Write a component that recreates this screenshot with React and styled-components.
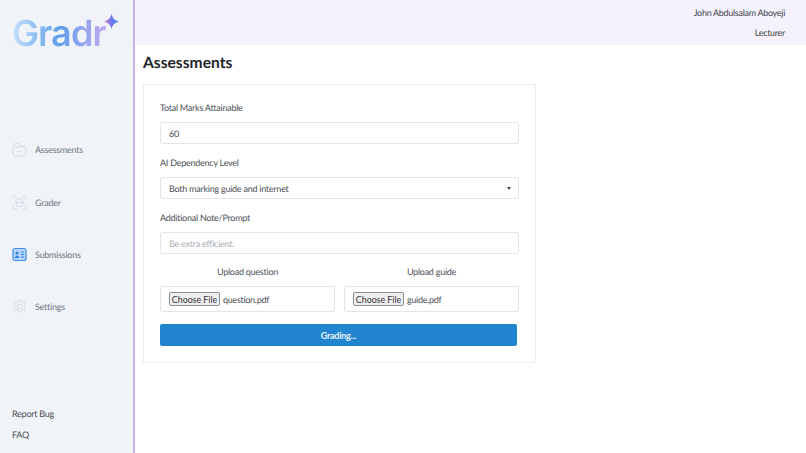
import styled, { createGlobalStyle } from "styled-components";

const GlobalStyle = createGlobalStyle`
  html, body {
    margin: 0;
    padding: 0;
    height: 100%;
    background: #ffffff;
    font-family: "Lato", "Liberation Sans", sans-serif;
    text-rendering: geometricPrecision;
  }
  * {
    box-sizing: border-box;
  }
`;

const Page = styled.div`
  display: flex;
  width: 806px;
  height: 453px;
  overflow: hidden;
`;

const Sidebar = styled.aside`
  display: flex;
  flex-direction: column;
  flex: 0 0 135px;
  padding: 12px 0 12px 12px;
  background: #f0f4f9;
  border-right: 2px solid #c9b2ea;
`;

const Logo = styled.div`
  display: flex;
  align-items: flex-start;
  height: 38px;
`;

const LogoText = styled.span`
  font-family: "Inter", sans-serif;
  font-size: 36px;
  line-height: 42px;
  font-weight: 600;
  letter-spacing: -0.9px;
  background: linear-gradient(90deg, #c4e0fb 0%, #5f9fec 50%, #c2aaf3 100%);
  -webkit-background-clip: text;
  background-clip: text;
  color: transparent;
`;

const Nav = styled.nav`
  display: flex;
  flex-direction: column;
  gap: 36.8px;
  margin-top: 92px;
`;

const NavItem = styled.div`
  display: flex;
  align-items: center;
  gap: 8px;
  height: 15.5px;
  font-size: 9px;
  letter-spacing: -0.25px;
  color: #6f7480;
`;

const IconBox = styled.svg`
  flex: 0 0 15px;
  width: 15px;
  height: 15px;
`;

const Footer = styled.div`
  display: flex;
  flex-direction: column;
  gap: 8px;
  margin-top: auto;
  font-size: 9px;
  letter-spacing: -0.25px;
  color: #4a4d53;
`;

const FooterLink = styled.div`
  line-height: 13px;
`;

const Main = styled.main`
  flex: 1;
  display: flex;
  flex-direction: column;
`;

const Header = styled.header`
  display: flex;
  flex-direction: column;
  align-items: flex-end;
  gap: 8px;
  height: 45px;
  padding: 7px 21px 0 0;
  background: #f5f2fd;
  font-size: 9px;
  letter-spacing: -0.3px;
  line-height: 12px;
  color: #44464c;
`;

const Content = styled.div`
  padding: 7px 8px;
`;

const Title = styled.h1`
  margin: 0 0 10px;
  font-size: 15.6px;
  line-height: 22px;
  font-weight: 700;
  color: #212529;
`;

const Card = styled.section`
  display: flex;
  flex-direction: column;
  width: 393px;
  height: 279px;
  padding: 17px 16px 0;
  background: #ffffff;
  border: 1px solid #eceef1;
`;

const Label = styled.label`
  display: block;
  height: 12px;
  margin-bottom: 8px;
  font-size: 9px;
  letter-spacing: -0.25px;
  line-height: 12px;
  color: #4c4f55;
`;

const Field = styled.div`
  display: flex;
  align-items: center;
  justify-content: space-between;
  width: 359px;
  height: 22px;
  margin-bottom: 13px;
  padding: 0 8px;
  background: #ffffff;
  border: 1px solid #e3e6ea;
  border-radius: 2px;
  font-size: 9px;
  letter-spacing: -0.25px;
  color: ${(props) => (props.$placeholder ? "#a9adb3" : "#4c4f55")};
`;

const Caret = styled.span`
  width: 0;
  height: 0;
  margin-right: -1px;
  border-left: 2.5px solid transparent;
  border-right: 2.5px solid transparent;
  border-top: 3px solid #44464c;
`;

const UploadRow = styled.div`
  display: grid;
  grid-template-columns: 175px 175px;
  gap: 9px;
`;

const UploadColumn = styled.div`
  display: flex;
  flex-direction: column;
`;

const UploadTitle = styled(Label)`
  margin-top: -1px;
  margin-bottom: 8px;
  text-align: center;
`;

const FileBox = styled.div`
  display: flex;
  align-items: center;
  gap: 3px;
  height: 26px;
  padding: 0 8px;
  border: 1px solid #e3e6ea;
  border-radius: 2px;
  font-size: 9px;
  letter-spacing: -0.3px;
  color: #4c4f55;
`;

const FileButton = styled.button`
  width: 51px;
  height: 14px;
  padding: 0;
  background: #efefef;
  border: 1px solid #8f8f8f;
  border-radius: 2px;
  font-family: inherit;
  font-size: 8.8px;
  letter-spacing: 0;
  line-height: 11px;
  color: #333333;
`;

const SubmitButton = styled.button`
  width: 357px;
  height: 22px;
  margin-top: 12px;
  background: #2185d0;
  border: 0;
  border-radius: 2px;
  font-family: inherit;
  font-size: 9px;
  letter-spacing: -0.25px;
  font-weight: 700;
  color: #e8f2fa;
`;

const Sparkle = styled.svg`
  flex: 0 0 15px;
  width: 15px;
  height: 15px;
  margin: 2px 0 0 -2px;
`;

const FolderIcon = () => (
  <IconBox viewBox="0 0 15 15" fill="none" stroke="#d5dbe3" strokeWidth="1">
    <path d="M2 5V3a1.500 1.500 0 0 1 1.500-1.500h2.500l1.500 2h3.500a1.500 1.500 0 0 1 1.500 1.500" />
    <rect x="1" y="5" width="13" height="9" rx="2" />
    <path d="M5.500 9.500h4" />
  </IconBox>
);

const GraderIcon = () => (
  <IconBox viewBox="0 0 15 15" fill="none" stroke="#d5dbe3" strokeWidth="1">
    <path d="M1 4.500V3a2 2 0 0 1 2-2h1.500M10.500 1H12a2 2 0 0 1 2 2v1.500M14 10.500V12a2 2 0 0 1-2 2h-1.500M4.500 14H3a2 2 0 0 1-2-2v-1.500" />
    <rect x="4" y="3.500" width="7" height="8" rx="3" />
    <path d="M2.500 7.500h10" />
  </IconBox>
);

const SubmissionsIcon = () => (
  <IconBox viewBox="0 0 15 15" fill="none">
    <rect x="1" y="1.500" width="13" height="12" rx="2" fill="#b9d7fb" stroke="#3f8df0" strokeWidth="1.200" />
    <circle cx="5" cy="6" r="1.600" fill="#2f7fe6" />
    <path d="M2.800 11c.3-1.800 1.200-2.600 2.200-2.600s1.900.8 2.200 2.600z" fill="#2f7fe6" />
    <path d="M8.800 5h3.200M8.800 7.500h3.200M8.800 10h3.200" stroke="#2f7fe6" strokeWidth="1" />
  </IconBox>
);

const SettingsIcon = () => (
  <IconBox viewBox="0 0 15 15" fill="none" stroke="#d5dbe3" strokeWidth="1">
    <circle cx="7.500" cy="7.500" r="2.300" />
    <path d="M6.200 1h2.600l.4 1.800 1.300.7 1.800-.6 1.300 2.200-1.400 1.300v1.200l1.400 1.300-1.300 2.200-1.800-.6-1.300.7-.4 1.800H6.200l-.4-1.800-1.300-.7-1.800.6L1.400 9.900l1.400-1.300V7.400L1.400 6.100l1.300-2.200 1.800.6 1.300-.7z" strokeLinejoin="round" />
  </IconBox>
);

const navItems = [
  { label: "Assessments", icon: <FolderIcon /> },
  { label: "Grader", icon: <GraderIcon /> },
  { label: "Submissions", icon: <SubmissionsIcon /> },
  { label: "Settings", icon: <SettingsIcon /> },
];

const App = () => {
  return (
    <>
      <GlobalStyle />
      <Page>
        <Sidebar>
          <Logo>
            <LogoText>Gradr</LogoText>
            <Sparkle viewBox="0 0 16 16">
              <defs>
                <linearGradient id="spark" x1="0" y1="0" x2="1" y2="0">
                  <stop offset="0" stopColor="#e070d0" />
                  <stop offset="0.5" stopColor="#6f78ee" />
                  <stop offset="1" stopColor="#4d8cf2" />
                </linearGradient>
              </defs>
              <path d="M8 0C9 4 11 6.500 16 8C11 9.500 9 12 8 16C7 12 5 9.500 0 8C5 6.500 7 4 8 0Z" fill="url(#spark)" />
            </Sparkle>
          </Logo>
          <Nav>
            {navItems.map((item) => (
              <NavItem key={item.label}>
                {item.icon}
                {item.label}
              </NavItem>
            ))}
          </Nav>
          <Footer>
            <FooterLink>Report Bug</FooterLink>
            <FooterLink>FAQ</FooterLink>
          </Footer>
        </Sidebar>
        <Main>
          <Header>
            <div>John Abdulsalam Aboyeji</div>
            <div>Lecturer</div>
          </Header>
          <Content>
            <Title>Assessments</Title>
            <Card>
              <Label>Total Marks Attainable</Label>
              <Field>60</Field>
              <Label>AI Dependency Level</Label>
              <Field>
                Both marking guide and internet
                <Caret />
              </Field>
              <Label>Additional Note/Prompt</Label>
              <Field $placeholder>Be extra efficient.</Field>
              <UploadRow>
                <UploadColumn>
                  <UploadTitle>Upload question</UploadTitle>
                  <FileBox>
                    <FileButton>Choose File</FileButton>
                    question.pdf
                  </FileBox>
                </UploadColumn>
                <UploadColumn>
                  <UploadTitle>Upload guide</UploadTitle>
                  <FileBox>
                    <FileButton>Choose File</FileButton>
                    guide.pdf
                  </FileBox>
                </UploadColumn>
              </UploadRow>
              <SubmitButton>Grading...</SubmitButton>
            </Card>
          </Content>
        </Main>
      </Page>
    </>
  );
};

export default App;
